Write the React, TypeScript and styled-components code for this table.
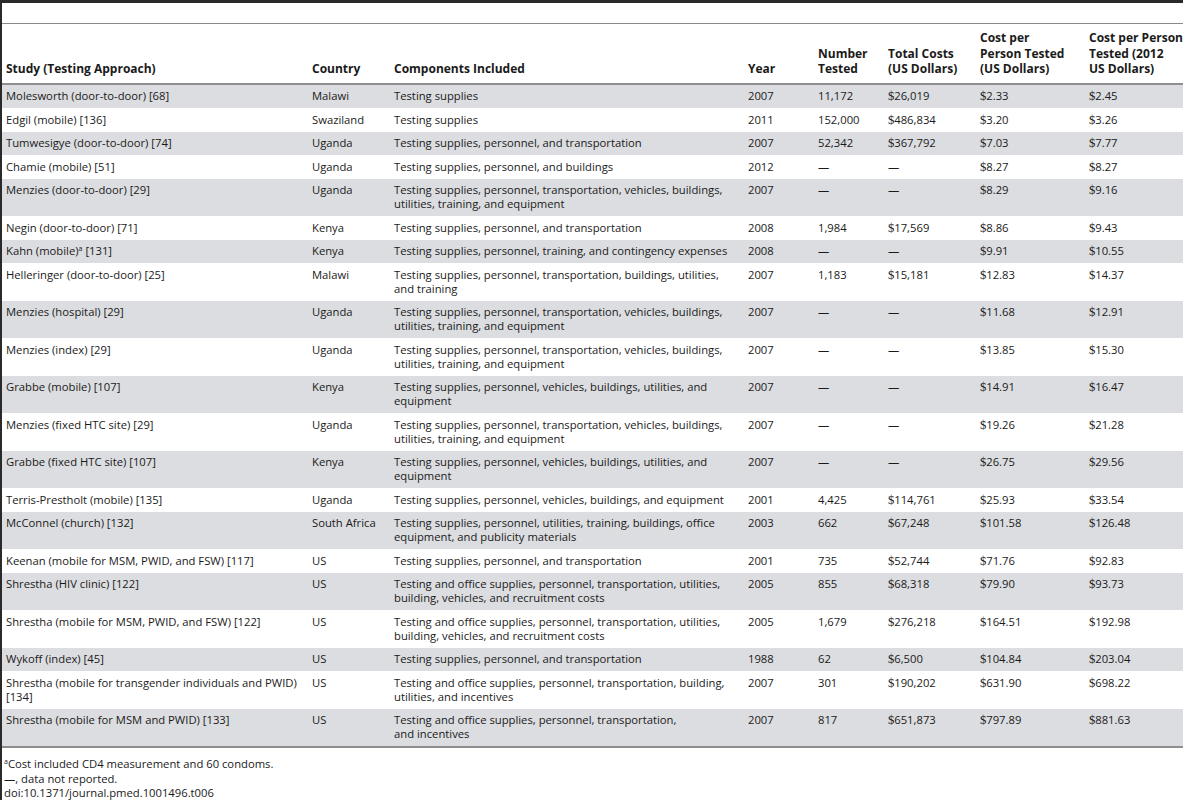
import styled, { createGlobalStyle } from 'styled-components';

const GlobalStyle = createGlobalStyle`
    html, body {
        margin: 0;
        padding: 0;
        background: #ffffff;
        overflow: hidden;
    }
    body {
        font-family: "Open Sans", "Noto Sans", sans-serif;
        color: #1a1a1a;
    }
`;

const Frame = styled.div`
    width: 1183px;
    height: 800px;
    border-left: 2px solid #2a2a2a;
    border-top: 3px solid #2a2a2a;
    box-sizing: border-box;
    overflow: hidden;
`;

const Caption = styled.div`
    height: 20px;
    border-bottom: 1px solid #8a8a8a;
`;

const Table = styled.table`
    border-collapse: collapse;
    table-layout: fixed;
    width: 1200px;
    font-size: 11.25px;
`;

const HeadCell = styled.th`
    text-align: left;
    vertical-align: bottom;
    font-weight: 700;
    font-size: 12px;
    line-height: 15.5px;
    padding: 6px 4px 6px;
    white-space: pre-line;
    border-bottom: 2px solid #8e8e8e;
`;

const Row = styled.tr<{ $shaded: boolean }>`
    background: ${(props) => (props.$shaded ? '#dcdde0' : '#ffffff')};
    &:last-child td {
        border-bottom: 2px solid #8e8e8e;
    }
`;

const Cell = styled.td`
    vertical-align: top;
    line-height: 14px;
    padding: 4.75px 4px;
    white-space: pre-line;
`;

const Dollar = styled.span`
    font-family: "Liberation Serif", serif;
    font-size: 12.5px;
`;

const Sup = styled.sup`
    font-size: 7px;
    line-height: 0;
    vertical-align: 4px;
`;

const Notes = styled.div`
    padding: 9px 2px 0;
    font-size: 11.25px;
    line-height: 14.5px;
`;

const cols = [306, 82, 354, 70, 70, 92, 109, 117];

const heads = [
    'Study (Testing Approach)',
    'Country',
    'Components Included',
    'Year',
    'Number\nTested',
    'Total Costs\n(US Dollars)',
    'Cost per\nPerson Tested\n(US Dollars)',
    'Cost per Person\nTested (2012\nUS Dollars)',
];

const FULL = 'Testing supplies, personnel, transportation, vehicles, buildings,\nutilities, training, and equipment';
const GRABBE = 'Testing supplies, personnel, vehicles, buildings, utilities, and\nequipment';
const SHRESTHA = 'Testing and office supplies, personnel, transportation, utilities,\nbuilding, vehicles, and recruitment costs';

interface IStudy {
    study: string,
    note?: boolean,
    ref?: string,
    country: string,
    parts: string,
    year: string,
    tested: string,
    total: string,
    perPerson: string,
    per2012: string,
}

const rows: IStudy[] = [
    { study: 'Molesworth (door-to-door) [68]', country: 'Malawi', parts: 'Testing supplies', year: '2007', tested: '11,172', total: '26,019', perPerson: '2.33', per2012: '2.45' },
    { study: 'Edgil (mobile) [136]', country: 'Swaziland', parts: 'Testing supplies', year: '2011', tested: '152,000', total: '486,834', perPerson: '3.20', per2012: '3.26' },
    { study: 'Tumwesigye (door-to-door) [74]', country: 'Uganda', parts: 'Testing supplies, personnel, and transportation', year: '2007', tested: '52,342', total: '367,792', perPerson: '7.03', per2012: '7.77' },
    { study: 'Chamie (mobile) [51]', country: 'Uganda', parts: 'Testing supplies, personnel, and buildings', year: '2012', tested: '—', total: '—', perPerson: '8.27', per2012: '8.27' },
    { study: 'Menzies (door-to-door) [29]', country: 'Uganda', parts: FULL, year: '2007', tested: '—', total: '—', perPerson: '8.29', per2012: '9.16' },
    { study: 'Negin (door-to-door) [71]', country: 'Kenya', parts: 'Testing supplies, personnel, and transportation', year: '2008', tested: '1,984', total: '17,569', perPerson: '8.86', per2012: '9.43' },
    { study: 'Kahn (mobile)', note: true, ref: ' [131]', country: 'Kenya', parts: 'Testing supplies, personnel, training, and contingency expenses', year: '2008', tested: '—', total: '—', perPerson: '9.91', per2012: '10.55' },
    { study: 'Helleringer (door-to-door) [25]', country: 'Malawi', parts: 'Testing supplies, personnel, transportation, buildings, utilities,\nand training', year: '2007', tested: '1,183', total: '15,181', perPerson: '12.83', per2012: '14.37' },
    { study: 'Menzies (hospital) [29]', country: 'Uganda', parts: FULL, year: '2007', tested: '—', total: '—', perPerson: '11.68', per2012: '12.91' },
    { study: 'Menzies (index) [29]', country: 'Uganda', parts: FULL, year: '2007', tested: '—', total: '—', perPerson: '13.85', per2012: '15.30' },
    { study: 'Grabbe (mobile) [107]', country: 'Kenya', parts: GRABBE, year: '2007', tested: '—', total: '—', perPerson: '14.91', per2012: '16.47' },
    { study: 'Menzies (fixed HTC site) [29]', country: 'Uganda', parts: FULL, year: '2007', tested: '—', total: '—', perPerson: '19.26', per2012: '21.28' },
    { study: 'Grabbe (fixed HTC site) [107]', country: 'Kenya', parts: GRABBE, year: '2007', tested: '—', total: '—', perPerson: '26.75', per2012: '29.56' },
    { study: 'Terris-Prestholt (mobile) [135]', country: 'Uganda', parts: 'Testing supplies, personnel, vehicles, buildings, and equipment', year: '2001', tested: '4,425', total: '114,761', perPerson: '25.93', per2012: '33.54' },
    { study: 'McConnel (church) [132]', country: 'South Africa', parts: 'Testing supplies, personnel, utilities, training, buildings, office\nequipment, and publicity materials', year: '2003', tested: '662', total: '67,248', perPerson: '101.58', per2012: '126.48' },
    { study: 'Keenan (mobile for MSM, PWID, and FSW) [117]', country: 'US', parts: 'Testing supplies, personnel, and transportation', year: '2001', tested: '735', total: '52,744', perPerson: '71.76', per2012: '92.83' },
    { study: 'Shrestha (HIV clinic) [122]', country: 'US', parts: SHRESTHA, year: '2005', tested: '855', total: '68,318', perPerson: '79.90', per2012: '93.73' },
    { study: 'Shrestha (mobile for MSM, PWID, and FSW) [122]', country: 'US', parts: SHRESTHA, year: '2005', tested: '1,679', total: '276,218', perPerson: '164.51', per2012: '192.98' },
    { study: 'Wykoff (index) [45]', country: 'US', parts: 'Testing supplies, personnel, and transportation', year: '1988', tested: '62', total: '6,500', perPerson: '104.84', per2012: '203.04' },
    { study: 'Shrestha (mobile for transgender individuals and PWID)\n[134]', country: 'US', parts: 'Testing and office supplies, personnel, transportation, building,\nutilities, and incentives', year: '2007', tested: '301', total: '190,202', perPerson: '631.90', per2012: '698.22' },
    { study: 'Shrestha (mobile for MSM and PWID) [133]', country: 'US', parts: 'Testing and office supplies, personnel, transportation,\nand incentives', year: '2007', tested: '817', total: '651,873', perPerson: '797.89', per2012: '881.63' },
];

function Money({ value }: { value: string }) {
    if (value === '—') return <>—</>;
    return (
        <>
            <Dollar>$</Dollar>{value}
        </>
    );
}

function App() {
    return (
        <>
            <GlobalStyle />
            <Frame>
                <Caption />
                <Table>
                    <colgroup>
                        {cols.map((w, i) => <col key={i} style={{ width: w }} />)}
                    </colgroup>
                    <thead>
                        <tr>
                            {heads.map((h) => <HeadCell key={h}>{h}</HeadCell>)}
                        </tr>
                    </thead>
                    <tbody>
                        {rows.map((r, i) => (
                            <Row key={i} $shaded={i % 2 === 0}>
                                <Cell>
                                    {r.study}
                                    {r.note && <Sup>a</Sup>}
                                    {r.ref}
                                </Cell>
                                <Cell>{r.country}</Cell>
                                <Cell>{r.parts}</Cell>
                                <Cell>{r.year}</Cell>
                                <Cell>{r.tested}</Cell>
                                <Cell><Money value={r.total} /></Cell>
                                <Cell><Money value={r.perPerson} /></Cell>
                                <Cell><Money value={r.per2012} /></Cell>
                            </Row>
                        ))}
                    </tbody>
                </Table>
                <Notes>
                    <div><Sup>a</Sup>Cost included CD4 measurement and 60 condoms.</div>
                    <div>—, data not reported.</div>
                    <div>doi:10.1371/journal.pmed.1001496.t006</div>
                </Notes>
            </Frame>
        </>
    );
}

export default App;
